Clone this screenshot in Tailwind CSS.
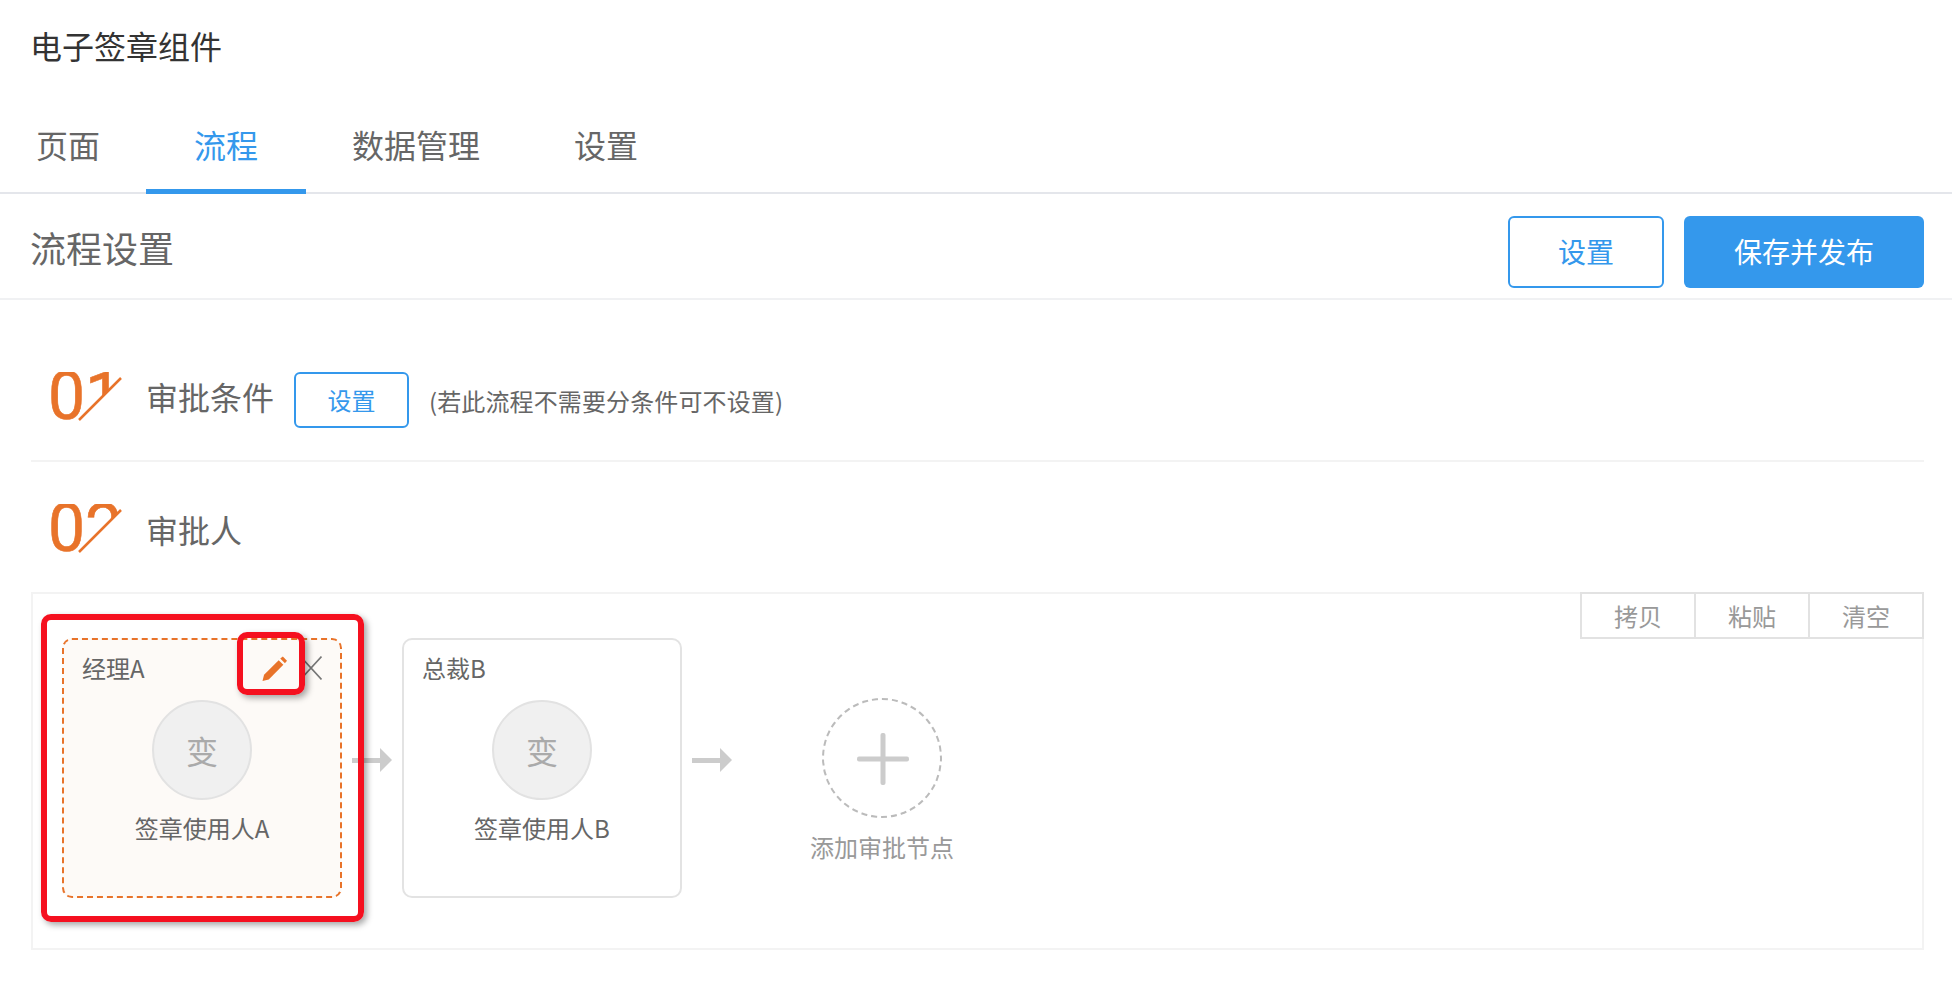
<!DOCTYPE html>
<html lang="zh-CN">
<head>
  <meta charset="UTF-8">
  <title>电子签章组件</title>
  <script src="https://cdn.jsdelivr.net/npm/@tailwindcss/browser@4"></script>
</head>
<body class="bg-white font-['Noto_Sans_CJK_SC','Noto_Sans',sans-serif] text-[#666]">
  <!-- Header -->
  <header class="h-[95px] pb-[5px] flex items-center pl-[30px] text-[32px] text-[#333]">电子签章组件</header>

  <!-- Tabs -->
  <nav class="h-[99px] flex border-b-2 border-[#e4e6eb] text-[32px]">
    <a class="pl-[36px] pr-[46px] pt-[30px] leading-[38px]">页面</a>
    <a class="w-[160px] text-center pt-[30px] leading-[38px] text-[#3498ec] border-b-[5px] border-[#3498ec] h-[99px]">流程</a>
    <a class="pl-[46px] pr-[47px] pt-[30px] leading-[38px]">数据管理</a>
    <a class="pl-[47px] pt-[30px] leading-[38px]">设置</a>
  </nav>

  <!-- Section title -->
  <section class="h-[106px] pt-[22px] pl-[30px] pr-[28px] flex justify-between items-start border-b-2 border-[#f0f1f3]">
    <h2 class="text-[36px] leading-[62px]">流程设置</h2>
    <div class="flex gap-[20px] text-[28px]">
      <button class="w-[156px] h-[72px] pb-[2px] rounded-md border-2 border-[#3498ec] text-[#3498ec]">设置</button>
      <button class="w-[240px] h-[72px] pb-[2px] rounded-md bg-[#3498ec] text-white">保存并发布</button>
    </div>
  </section>

  <main class="pl-[31px] pr-[28px]">
    <!-- Step 1 -->
    <div class="h-[162px] pt-[72px] flex items-start border-b-2 border-[#f3f3f3]">
      <svg class="ml-[17px] w-[78px] h-[50px]" viewBox="0 0 78 50">
        <clipPath id="cut1"><polygon points="0,0 78,0 78,1 29,50 0,50"/></clipPath>
        <text x="0" y="47" clip-path="url(#cut1)" font-family="Roboto" font-size="66" font-weight="400" stroke="#e8732a" stroke-width="0.6" fill="#e8732a">01</text>
        <line x1="31" y1="48" x2="73" y2="6" stroke="#e8732a" stroke-width="2.5"/>
      </svg>
      <span class="ml-[20px] text-[32px] leading-[48px]">审批条件</span>
      <button class="ml-[20px] w-[115px] h-[56px] rounded-md border-2 border-[#3498ec] text-[#3498ec] text-2xl">设置</button>
      <span class="ml-[20px] text-2xl leading-[58px] tracking-[0.12px]">(若此流程不需要分条件可不设置)</span>
    </div>

    <!-- Step 2 -->
    <div class="h-[130px] pt-[42px] flex items-start">
      <svg class="ml-[17px] w-[78px] h-[50px]" viewBox="0 0 78 50">
        <clipPath id="cut2"><polygon points="0,0 78,0 78,1 29,50 0,50"/></clipPath>
        <text x="0" y="47" clip-path="url(#cut2)" font-family="Roboto" font-size="66" font-weight="400" stroke="#e8732a" stroke-width="0.6" fill="#e8732a">02</text>
        <line x1="31" y1="48" x2="73" y2="6" stroke="#e8732a" stroke-width="2.5"/>
      </svg>
      <span class="ml-[20px] text-[32px] leading-[48px] mt-[1px]">审批人</span>
    </div>

    <!-- Flow canvas -->
    <div class="relative h-[358px] border-2 border-[#f3f3f3] pl-[29px] pt-[44px] flex items-start">
      <div class="absolute -top-[2px] -right-[2px] w-[344px] h-[47px] flex border-2 border-[#e2e2e2] divide-x-2 divide-[#e2e2e2] text-2xl text-[#999]">
        <button class="flex-1">拷贝</button>
        <button class="flex-1">粘贴</button>
        <button class="flex-1">清空</button>
      </div>

      <!-- Node A -->
      <div class="w-[280px] h-[260px] rounded-[10px] border-2 border-dashed border-[#e8732a] bg-[#fdfaf7] pt-[10px] text-2xl">
        <div class="h-[36px] px-[18px] flex items-center justify-between">
          <span class="leading-[36px]">经理A</span>
          <div class="flex items-center gap-[13px]">
            <svg class="w-[25px] h-[25px]" viewBox="0 0 24 24" fill="#e8732a"><path d="M0.5 24 2 18 16 4 20.5 8.5 6.5 22.5Z"/><path d="M17.5 2.5 20 0.5 24 4.5 22 7Z"/></svg>
            <svg class="w-[22px] h-[24px]" viewBox="0 0 22 24" stroke="#777" stroke-width="1.6" fill="none"><path d="M0.5 0.5 21.5 23.5M21.5 0.5 0.5 23.5"/></svg>
          </div>
        </div>
        <div class="mt-[14px] mx-auto w-[100px] h-[100px] rounded-full bg-[#f0f0f0] border-2 border-[#e2e2e2] flex items-center justify-center text-[32px] text-[#aaa]">变</div>
        <div class="mt-[10px] text-center leading-[36px]">签章使用人A</div>
      </div>

      <svg class="mt-[110px] ml-[10px] mr-[10px] w-[40px] h-[24px]" viewBox="0 0 40 24" fill="#ccc"><rect x="0" y="10" width="30" height="5"/><path d="M28 0 40 12 28 24Z"/></svg>

      <!-- Node B -->
      <div class="w-[280px] h-[260px] rounded-[10px] border-2 border-[#e3e3e3] bg-white pt-[10px] text-2xl">
        <div class="h-[36px] px-[18px] flex items-center">
          <span class="leading-[36px]">总裁B</span>
        </div>
        <div class="mt-[14px] mx-auto w-[100px] h-[100px] rounded-full bg-[#f0f0f0] border-2 border-[#e2e2e2] flex items-center justify-center text-[32px] text-[#aaa]">变</div>
        <div class="mt-[10px] text-center leading-[36px]">签章使用人B</div>
      </div>

      <svg class="mt-[110px] ml-[10px] w-[40px] h-[24px]" viewBox="0 0 40 24" fill="#ccc"><rect x="0" y="10" width="30" height="5"/><path d="M28 0 40 12 28 24Z"/></svg>

      <!-- Add node -->
      <div class="ml-[78px] mt-[60px] w-[144px] flex flex-col items-center">
        <div class="w-[120px] h-[120px] rounded-full border-2 border-dashed border-[#bbb] flex items-center justify-center pl-[2px] pt-[2px]">
          <svg class="w-[52px] h-[52px]" viewBox="0 0 52 52" fill="#ccc"><rect x="0" y="23.5" width="52" height="5" rx="2"/><rect x="23.5" y="0" width="5" height="52" rx="2"/></svg>
        </div>
        <span class="mt-[11px] text-2xl leading-[36px] text-[#999] whitespace-nowrap">添加审批节点</span>
      </div>

      <!-- Red callouts -->
      <div class="absolute left-[8px] top-[20px] w-[323px] h-[308px] rounded-[10px] border-[6px] border-[#f5101f] shadow-[3px_3px_6px_rgba(0,0,0,0.35)]"></div>
      <div class="absolute left-[204px] top-[38px] w-[68px] h-[63px] rounded-[10px] border-[6px] border-[#f5101f] shadow-[3px_3px_6px_rgba(0,0,0,0.35)]"></div>
    </div>
  </main>
</body>
</html>
